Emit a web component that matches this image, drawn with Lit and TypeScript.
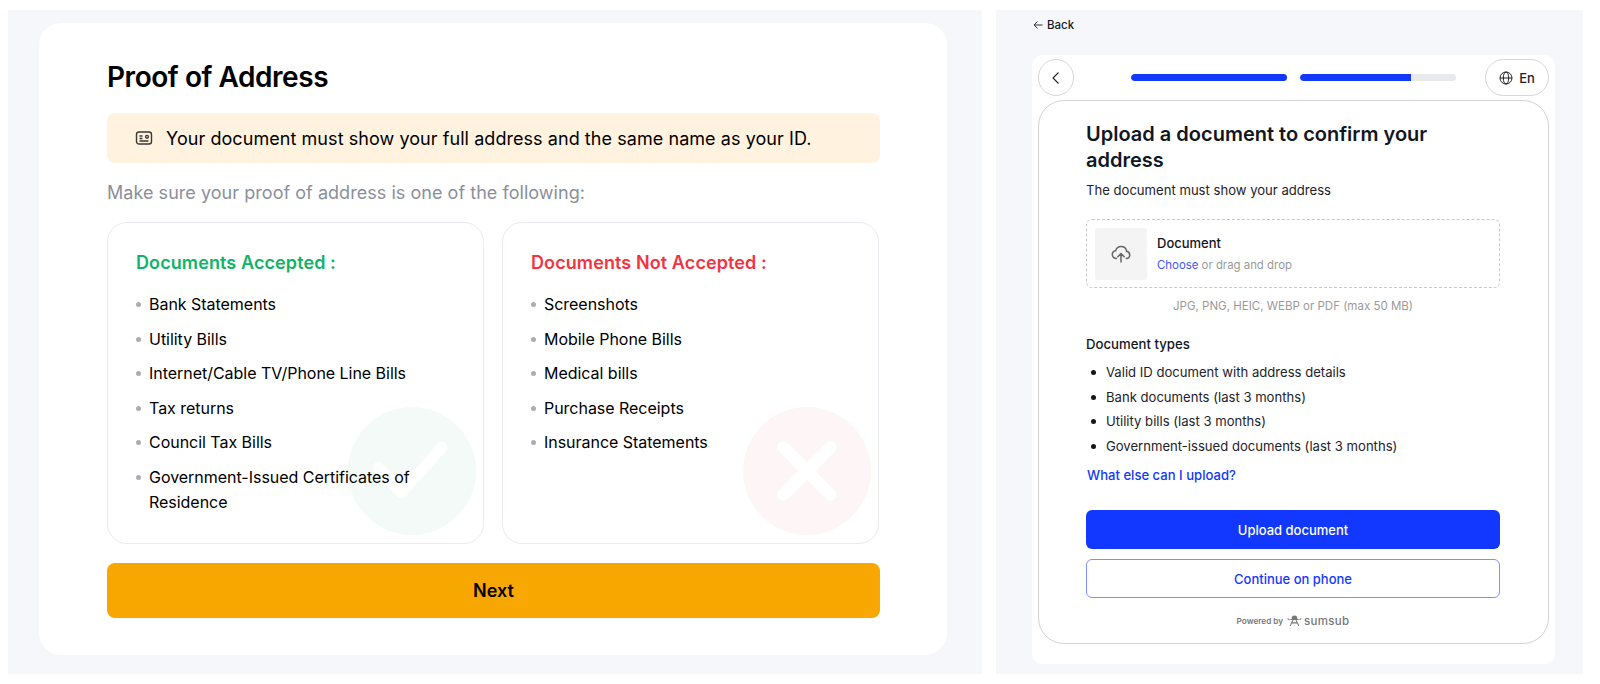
import { LitElement, html, css } from 'lit';
import { customElement } from 'lit/decorators.js';

const ACCEPTED = [
  'Bank Statements',
  'Utility Bills',
  'Internet/Cable TV/Phone Line Bills',
  'Tax returns',
  'Council Tax Bills',
  'Government-Issued Certificates of Residence',
];

const REJECTED = [
  'Screenshots',
  'Mobile Phone Bills',
  'Medical bills',
  'Purchase Receipts',
  'Insurance Statements',
];

const DOC_TYPES = [
  'Valid ID document with address details',
  'Bank documents (last 3 months)',
  'Utility bills (last 3 months)',
  'Government-issued documents (last 3 months)',
];

@customElement('app-root')
export class AppRoot extends LitElement {
  static styles = css`
    :host {
      display: flex;
      gap: 14px;
      box-sizing: border-box;
      width: 1600px;
      height: 684px;
      padding: 10px 17px 10px 8px;
      background: #fff;
      font-family: Inter, 'Liberation Sans', sans-serif;
      color: #000;
    }

    * {
      box-sizing: border-box;
    }

    .panel {
      background: #f5f7fb;
      height: 664px;
    }

    .left {
      width: 974px;
      padding: 13px 35px 19px 31px;
    }

    .sheet {
      height: 632px;
      padding: 37px 67px 0 68px;
      background: #fff;
      border-radius: 22px;
    }

    h1 {
      margin: 0;
      font-size: 28px;
      line-height: 34px;
      font-weight: 600;
      letter-spacing: -0.45px;
    }

    .notice {
      display: flex;
      align-items: center;
      gap: 13px;
      height: 50px;
      margin-top: 19px;
      padding-left: 28px;
      background: #fff3e0;
      border-radius: 8px;
      font-size: 18px;
      letter-spacing: 0.06px;
    }

    .intro {
      margin: 18px 0 0;
      font-size: 18px;
      line-height: 24px;
      letter-spacing: 0.04px;
      color: #8a8f9c;
    }

    .cards {
      display: grid;
      grid-template-columns: 377px 377px;
      gap: 18px;
      margin-top: 17px;
    }

    .card {
      position: relative;
      height: 322px;
      padding: 28px 27px 0 28px;
      border: 1px solid #e9ebf0;
      border-radius: 20px;
      overflow: hidden;
    }

    .card h2 {
      margin: 0 0 17px;
      font-size: 18px;
      line-height: 24px;
      font-weight: 600;
      letter-spacing: 0.1px;
    }

    .ok h2 {
      color: #10b368;
    }

    .no h2 {
      color: #f5333f;
    }

    .card ul {
      position: relative;
      margin: 0;
      padding: 0;
      list-style: none;
    }

    .card li {
      position: relative;
      margin-bottom: 10px;
      padding-left: 13px;
      font-size: 16px;
      line-height: 24.6px;
      letter-spacing: -0.03px;
    }

    .card li::before {
      content: '';
      position: absolute;
      left: 0;
      top: 10px;
      width: 5px;
      height: 5px;
      border-radius: 50%;
      background: #a9adb5;
    }

    .mark {
      position: absolute;
      right: 7px;
      bottom: 8px;
      width: 128px;
      height: 128px;
    }

    .next {
      display: block;
      width: 100%;
      height: 55px;
      margin-top: 19px;
      border: none;
      border-radius: 8px;
      background: #f8a700;
      color: #000;
      font: 600 18px Inter, 'Liberation Sans', sans-serif;
    }

    .right {
      width: 587px;
      padding: 0 28px 0 36px;
    }

    .back {
      display: flex;
      align-items: center;
      gap: 3px;
      height: 45px;
      padding-bottom: 16px;
      font-size: 11.5px;
      font-weight: 500;
      color: #14181f;
    }

    .frame {
      height: 609px;
      padding: 4px 6px 0;
      background: #fff;
      border-radius: 10px;
    }

    .steps {
      display: flex;
      align-items: center;
      height: 37px;
    }

    .round {
      display: flex;
      align-items: center;
      justify-content: center;
      height: 37px;
      border: 1px solid #d6d6d6;
      border-radius: 19px;
      color: #1b1f26;
    }

    .prev {
      width: 36px;
    }

    .bars {
      display: flex;
      gap: 13px;
      margin: 0 29px 0 57px;
    }

    .bar {
      width: 156px;
      height: 7px;
      border-radius: 4px;
      background: #e8e9ea;
      overflow: hidden;
    }

    .fill {
      height: 100%;
      border-radius: 4px 0 0 4px;
      background: #1238ff;
    }

    .lang {
      gap: 6px;
      width: 64px;
      font-size: 13px;
      font-weight: 500;
    }

    .inner {
      height: 544px;
      margin-top: 4px;
      padding: 21px 48px 0 47px;
      border: 1px solid #d4d4d4;
      border-radius: 26px;
    }

    .inner h3 {
      margin: 0;
      font-size: 20px;
      line-height: 25.5px;
      font-weight: 600;
      color: #11161f;
    }

    .hint {
      margin: 8px 0 0;
      font-size: 13.1px;
      line-height: 18px;
      color: #1d222b;
    }

    .drop {
      display: flex;
      align-items: center;
      gap: 10px;
      height: 69px;
      margin-top: 20px;
      padding-left: 8px;
      border: 1px dashed #c8c8c8;
      border-radius: 6px;
    }

    .thumb {
      display: flex;
      align-items: center;
      justify-content: center;
      width: 52px;
      height: 52px;
      border-radius: 3px;
      background: #f4f4f4;
    }

    .doc-name {
      font-size: 13px;
      line-height: 16px;
      font-weight: 500;
      color: #11161f;
    }

    .doc-action {
      margin-top: 6px;
      font-size: 11.4px;
      line-height: 16px;
      color: #9a9a9a;
    }

    .link {
      color: #3d56ff;
    }

    .formats {
      margin: 10px 0 0;
      text-align: center;
      font-size: 11.5px;
      line-height: 16px;
      color: #9a9a9a;
    }

    .types {
      margin: 21px 0 0;
      font-size: 13.2px;
      line-height: 18px;
      font-weight: 500;
      color: #11161f;
    }

    .inner ul {
      margin: 7px 0 0;
      padding: 0;
      list-style: none;
    }

    .inner li {
      position: relative;
      padding-left: 20px;
      font-size: 13.1px;
      line-height: 24.5px;
      color: #1d222b;
    }

    .inner li::before {
      content: '';
      position: absolute;
      left: 5px;
      top: 10px;
      width: 5px;
      height: 5px;
      border-radius: 50%;
      background: #11161f;
    }

    .more {
      margin: 8px 0 0 1px;
      font-size: 13.1px;
      line-height: 18px;
      font-weight: 500;
      color: #1238ff;
    }

    .btn {
      display: block;
      width: 100%;
      height: 39px;
      border-radius: 6px;
      font: 500 13px Inter, 'Liberation Sans', sans-serif;
    }

    .primary {
      margin-top: 26px;
      border: none;
      background: #1238ff;
      color: #fff;
    }

    .secondary {
      margin-top: 10px;
      border: 1px solid #7f8fff;
      background: #fff;
      color: #1238ff;
    }

    .powered {
      display: flex;
      align-items: center;
      justify-content: center;
      gap: 4px;
      margin-top: 14px;
      height: 18px;
      font-size: 8.2px;
      font-weight: 600;
      color: #777;
    }

    .brand {
      margin-left: -2px;
      font-size: 11.5px;
      font-weight: 500;
      letter-spacing: 0.3px;
    }
  `;

  private renderCard(kind: string, title: string, items: string[]) {
    return html`
      <div class="card ${kind}">
        ${kind === 'ok'
          ? html`<svg class="mark" viewBox="0 0 127 127">
              <circle cx="63.5" cy="63.5" r="63.5" fill="#f4faf7"></circle>
              <path d="M30 60 L53 85 L93 40" fill="none" stroke="#fff" stroke-width="11" stroke-linecap="round" stroke-linejoin="round"></path>
            </svg>`
          : html`<svg class="mark" viewBox="0 0 127 127">
              <circle cx="63.5" cy="63.5" r="63.5" fill="#fef6f6"></circle>
              <path d="M40 40 L87 87 M87 40 L40 87" fill="none" stroke="#fff" stroke-width="12" stroke-linecap="round"></path>
            </svg>`}
        <h2>${title}</h2>
        <ul>${items.map((i) => html`<li>${i}</li>`)}</ul>
      </div>
    `;
  }

  render() {
    return html`
      <section class="panel left">
        <div class="sheet">
          <h1>Proof of Address</h1>
          <div class="notice">
            <svg width="18" height="18" viewBox="0 0 18 18" fill="none" stroke="#3a3a36" stroke-width="1.4">
              <rect x="1.5" y="3" width="15" height="12" rx="2.5"></rect>
              <path d="M4.5 7h3M4.5 9.5h3M4.5 12h9"></path>
              <circle cx="12" cy="7.8" r="1.4"></circle>
            </svg>
            <span>Your document must show your full address and the same name as your ID.</span>
          </div>
          <p class="intro">Make sure your proof of address is one of the following:</p>
          <div class="cards">
            ${this.renderCard('ok', 'Documents Accepted :', ACCEPTED)}
            ${this.renderCard('no', 'Documents Not Accepted :', REJECTED)}
          </div>
          <button class="next">Next</button>
        </div>
      </section>

      <section class="panel right">
        <div class="back">
          <svg width="12" height="12" viewBox="0 0 12 12" fill="none" stroke="#333" stroke-width="1">
            <path d="M10.5 6H2M5.5 2.5 2 6l3.5 3.5"></path>
          </svg>
          Back
        </div>
        <div class="frame">
          <div class="steps">
            <div class="round prev">
              <svg width="14" height="14" viewBox="0 0 14 14" fill="none" stroke="#222" stroke-width="1.1">
                <path d="M9.5 1.5 4 7l5.5 5.5"></path>
              </svg>
            </div>
            <div class="bars">
              <div class="bar"><div class="fill" style="width: 100%"></div></div>
              <div class="bar"><div class="fill" style="width: 71%"></div></div>
            </div>
            <div class="round lang">
              <svg width="14" height="14" viewBox="0 0 14 14" fill="none" stroke="#222" stroke-width="1">
                <circle cx="7" cy="7" r="6"></circle>
                <ellipse cx="7" cy="7" rx="2.7" ry="6"></ellipse>
                <path d="M1 7h12"></path>
              </svg>
              En
            </div>
          </div>
          <div class="inner">
            <h3>Upload a document to confirm your address</h3>
            <p class="hint">The document must show your address</p>
            <div class="drop">
              <div class="thumb">
                <svg width="20" height="20" viewBox="0 0 20 20" fill="none" stroke="#666" stroke-width="1.5" stroke-linecap="round" stroke-linejoin="round">
                  <path d="M5.5 14.5C3 14.5 1.3 12.8 1.3 10.6c0-2 1.5-3.6 3.4-3.9C5.4 4 7.6 2.4 10 2.4c2.9 0 5.2 2.1 5.6 4.8 1.8.4 3.1 1.8 3.1 3.7 0 1.9-1.4 3.4-3.4 3.6"></path>
                  <path d="M10 18v-8M6.8 12.8 10 9.6l3.2 3.2"></path>
                </svg>
              </div>
              <div>
                <div class="doc-name">Document</div>
                <div class="doc-action"><span class="link">Choose</span> or drag and drop</div>
              </div>
            </div>
            <p class="formats">JPG, PNG, HEIC, WEBP or PDF (max 50 MB)</p>
            <p class="types">Document types</p>
            <ul>${DOC_TYPES.map((t) => html`<li>${t}</li>`)}</ul>
            <p class="more">What else can I upload?</p>
            <button class="btn primary">Upload document</button>
            <button class="btn secondary">Continue on phone</button>
            <div class="powered">
              Powered by
              <svg width="15" height="12" viewBox="0 0 16 12" fill="none" stroke="#777" stroke-width="1.1" stroke-linecap="round">
                <path d="M5.6 3.2a2.4 2.4 0 0 1 4.8 0z" fill="#777"></path>
                <path d="M4 4.4h8M6.2 5.4l-2.6 5.4M9.8 5.4l2.6 5.4M5.6 8h4.8M1 3.6l1.2.9M15 3.6l-1.2.9"></path>
              </svg>
              <span class="brand">sumsub</span>
            </div>
          </div>
        </div>
      </section>
    `;
  }
}
